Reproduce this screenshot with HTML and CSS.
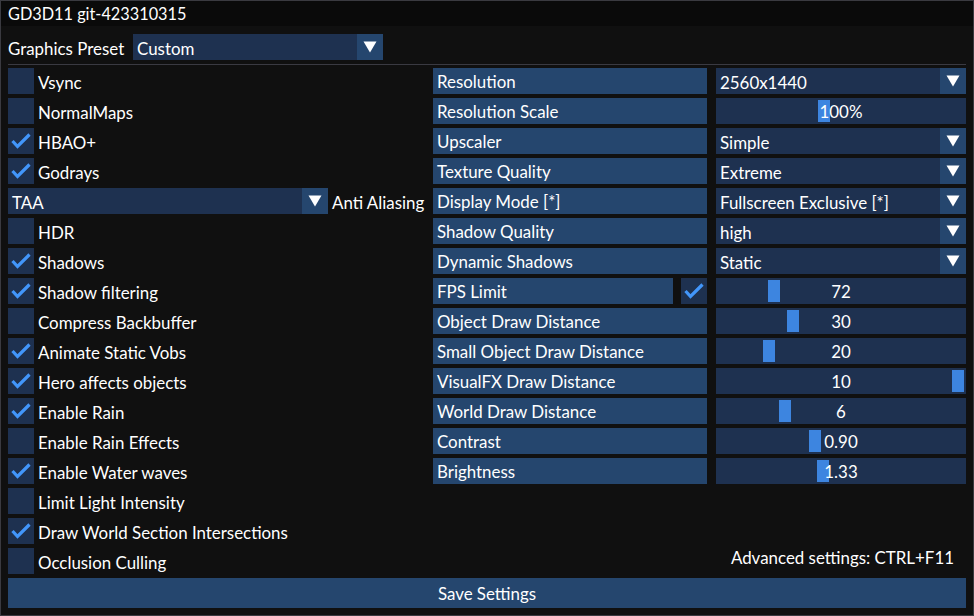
FILE: index.html
```html
<!DOCTYPE html>
<html>
<head>
<meta charset="utf-8">
<link rel="stylesheet" href="styles.css">
</head>
<body>
<div class="window">
  <div class="titlebar">GD3D11 git-423310315</div>
  <div class="content">
    <div class="preset-row">
      <span class="preset-label">Graphics Preset</span>
      <div class="combo preset-combo"><span class="combo-text">Custom</span><span class="arrow"><svg width="26" height="26" viewBox="0 0 26 26"><polygon points="6.5,7.5 19.5,7.5 13,18.5" fill="#fff"/></svg></span></div>
    </div>
    <div class="separator"></div>
    <div class="main">
      <div class="left">
        <div class="cb-row"><span class="checkbox"></span><span class="txt">Vsync</span></div>
        <div class="cb-row"><span class="checkbox"></span><span class="txt">NormalMaps</span></div>
        <div class="cb-row"><span class="checkbox"><svg width="26" height="26" viewBox="0 0 26 26"><polyline points="4.5,13 9.5,18.5 21.5,6.5" fill="none" stroke="#4296fa" stroke-width="3.2"/></svg></span><span class="txt">HBAO+</span></div>
        <div class="cb-row"><span class="checkbox"><svg width="26" height="26" viewBox="0 0 26 26"><polyline points="4.5,13 9.5,18.5 21.5,6.5" fill="none" stroke="#4296fa" stroke-width="3.2"/></svg></span><span class="txt">Godrays</span></div>
        <div class="cb-row"><div class="combo taa-combo"><span class="combo-text">TAA</span><span class="arrow"><svg width="26" height="26" viewBox="0 0 26 26"><polygon points="6.5,7.5 19.5,7.5 13,18.5" fill="#fff"/></svg></span></div><span class="txt">Anti Aliasing</span></div>
        <div class="cb-row"><span class="checkbox"></span><span class="txt">HDR</span></div>
        <div class="cb-row"><span class="checkbox"><svg width="26" height="26" viewBox="0 0 26 26"><polyline points="4.5,13 9.5,18.5 21.5,6.5" fill="none" stroke="#4296fa" stroke-width="3.2"/></svg></span><span class="txt">Shadows</span></div>
        <div class="cb-row"><span class="checkbox"><svg width="26" height="26" viewBox="0 0 26 26"><polyline points="4.5,13 9.5,18.5 21.5,6.5" fill="none" stroke="#4296fa" stroke-width="3.2"/></svg></span><span class="txt">Shadow filtering</span></div>
        <div class="cb-row"><span class="checkbox"></span><span class="txt">Compress Backbuffer</span></div>
        <div class="cb-row"><span class="checkbox"><svg width="26" height="26" viewBox="0 0 26 26"><polyline points="4.5,13 9.5,18.5 21.5,6.5" fill="none" stroke="#4296fa" stroke-width="3.2"/></svg></span><span class="txt">Animate Static Vobs</span></div>
        <div class="cb-row"><span class="checkbox"><svg width="26" height="26" viewBox="0 0 26 26"><polyline points="4.5,13 9.5,18.5 21.5,6.5" fill="none" stroke="#4296fa" stroke-width="3.2"/></svg></span><span class="txt">Hero affects objects</span></div>
        <div class="cb-row"><span class="checkbox"><svg width="26" height="26" viewBox="0 0 26 26"><polyline points="4.5,13 9.5,18.5 21.5,6.5" fill="none" stroke="#4296fa" stroke-width="3.2"/></svg></span><span class="txt">Enable Rain</span></div>
        <div class="cb-row"><span class="checkbox"></span><span class="txt">Enable Rain Effects</span></div>
        <div class="cb-row"><span class="checkbox"><svg width="26" height="26" viewBox="0 0 26 26"><polyline points="4.5,13 9.5,18.5 21.5,6.5" fill="none" stroke="#4296fa" stroke-width="3.2"/></svg></span><span class="txt">Enable Water waves</span></div>
        <div class="cb-row"><span class="checkbox"></span><span class="txt">Limit Light Intensity</span></div>
        <div class="cb-row"><span class="checkbox"><svg width="26" height="26" viewBox="0 0 26 26"><polyline points="4.5,13 9.5,18.5 21.5,6.5" fill="none" stroke="#4296fa" stroke-width="3.2"/></svg></span><span class="txt">Draw World Section Intersections</span></div>
        <div class="cb-row"><span class="checkbox"></span><span class="txt">Occlusion Culling</span></div>
      </div>
      <div class="right">
        <div class="grid">
          <div class="lbl">Resolution</div>
          <div class="combo"><span class="combo-text">2560x1440</span><span class="arrow"><svg width="26" height="26" viewBox="0 0 26 26"><polygon points="6.5,7.5 19.5,7.5 13,18.5" fill="#fff"/></svg></span></div>

          <div class="lbl">Resolution Scale</div>
          <div class="slider"><span class="grab" style="left:102px"></span><span class="val">100%</span></div>

          <div class="lbl">Upscaler</div>
          <div class="combo"><span class="combo-text">Simple</span><span class="arrow"><svg width="26" height="26" viewBox="0 0 26 26"><polygon points="6.5,7.5 19.5,7.5 13,18.5" fill="#fff"/></svg></span></div>

          <div class="lbl">Texture Quality</div>
          <div class="combo"><span class="combo-text">Extreme</span><span class="arrow"><svg width="26" height="26" viewBox="0 0 26 26"><polygon points="6.5,7.5 19.5,7.5 13,18.5" fill="#fff"/></svg></span></div>

          <div class="lbl">Display Mode [*]</div>
          <div class="combo"><span class="combo-text">Fullscreen Exclusive [*]</span><span class="arrow"><svg width="26" height="26" viewBox="0 0 26 26"><polygon points="6.5,7.5 19.5,7.5 13,18.5" fill="#fff"/></svg></span></div>

          <div class="lbl">Shadow Quality</div>
          <div class="combo"><span class="combo-text">high</span><span class="arrow"><svg width="26" height="26" viewBox="0 0 26 26"><polygon points="6.5,7.5 19.5,7.5 13,18.5" fill="#fff"/></svg></span></div>

          <div class="lbl">Dynamic Shadows</div>
          <div class="combo"><span class="combo-text">Static</span><span class="arrow"><svg width="26" height="26" viewBox="0 0 26 26"><polygon points="6.5,7.5 19.5,7.5 13,18.5" fill="#fff"/></svg></span></div>

          <div class="lbl-pair"><div class="lbl fps">FPS Limit</div><span class="checkbox"><svg width="26" height="26" viewBox="0 0 26 26"><polyline points="4.5,13 9.5,18.5 21.5,6.5" fill="none" stroke="#4296fa" stroke-width="3.2"/></svg></span></div>
          <div class="slider"><span class="grab" style="left:52px"></span><span class="val">72</span></div>

          <div class="lbl">Object Draw Distance</div>
          <div class="slider"><span class="grab" style="left:71px"></span><span class="val">30</span></div>

          <div class="lbl">Small Object Draw Distance</div>
          <div class="slider"><span class="grab" style="left:47px"></span><span class="val">20</span></div>

          <div class="lbl">VisualFX Draw Distance</div>
          <div class="slider"><span class="grab" style="left:236px"></span><span class="val">10</span></div>

          <div class="lbl">World Draw Distance</div>
          <div class="slider"><span class="grab" style="left:63px"></span><span class="val">6</span></div>

          <div class="lbl">Contrast</div>
          <div class="slider"><span class="grab" style="left:93px"></span><span class="val">0.90</span></div>

          <div class="lbl">Brightness</div>
          <div class="slider"><span class="grab" style="left:101px"></span><span class="val">1.33</span></div>
        </div>
        <div class="advanced">Advanced settings: CTRL+F11</div>
      </div>
    </div>
    <div class="save">Save Settings</div>
  </div>
</div>
</body>
</html>
```
FILE: styles.css
```css
html, body {
  margin: 0;
  padding: 0;
  background: #0f0f0f;
}
body {
  font-family: Lato, "Open Sans", sans-serif;
  font-size: 16.9px;
  color: #ffffff;
}
.window {
  box-sizing: border-box;
  width: 974px;
  height: 616px;
  border: 1px solid #3a3a40;
  background: #101010;
  display: flex;
  flex-direction: column;
  overflow: hidden;
}
.titlebar {
  height: 25px;
  background: #0a0a0a;
  padding-left: 7px;
  line-height: 26px;
  font-size: 16.3px;
  flex: none;
}
.content {
  flex: 1;
  padding: 8px 7px 7px 7px;
  display: flex;
  flex-direction: column;
}
.preset-row {
  display: flex;
  height: 26px;
  align-items: center;
}
.preset-label {
  width: 125px;
  padding-top: 2px;
  white-space: nowrap;
}
.combo {
  position: relative;
  display: flex;
  height: 26px;
  background: #1e3150;
  align-items: center;
}
.combo-text {
  flex: 1;
  padding-left: 4px;
  padding-top: 2px;
  white-space: nowrap;
}
.arrow {
  width: 26px;
  height: 26px;
  background: #25466e;
  flex: none;
}
.arrow svg, .checkbox svg {
  display: block;
}
.preset-combo {
  width: 250px;
}
.separator {
  height: 1px;
  background: #3a3a42;
  margin: 4px 0 3px 0;
  flex: none;
}
.main {
  display: flex;
  gap: 8px;
  height: 506px;
}
.left {
  width: 417px;
  display: flex;
  flex-direction: column;
  gap: 4px;
}
.cb-row {
  display: flex;
  height: 26px;
  align-items: center;
  gap: 4px;
}
.cb-row .txt {
  padding-top: 2px;
  white-space: nowrap;
}
.checkbox {
  width: 26px;
  height: 26px;
  background: #1e3150;
  flex: none;
}
.taa-combo {
  width: 320px;
}
.right {
  flex: 1;
  display: flex;
  flex-direction: column;
  justify-content: space-between;
}
.grid {
  display: grid;
  grid-template-columns: 274px 250px;
  column-gap: 9px;
  row-gap: 4px;
  grid-auto-rows: 26px;
}
.lbl {
  background: #25466e;
  height: 26px;
  line-height: 28px;
  padding-left: 4px;
  white-space: nowrap;
  box-sizing: border-box;
}
.lbl-pair {
  display: flex;
  gap: 8px;
}
.lbl.fps {
  flex: 1;
}
.slider {
  position: relative;
  height: 26px;
  background: #1e3150;
}
.grab {
  position: absolute;
  top: 2px;
  width: 12px;
  height: 22px;
  background: #3d85e0;
}
.val {
  position: relative;
  display: block;
  text-align: center;
  line-height: 28px;
}
.advanced {
  text-align: right;
  padding-right: 12px;
  margin-bottom: 6px;
  line-height: 20px;
}
.save {
  margin-top: 4px;
  height: 30px;
  background: #25466e;
  text-align: center;
  line-height: 32px;
  flex: none;
}
```
